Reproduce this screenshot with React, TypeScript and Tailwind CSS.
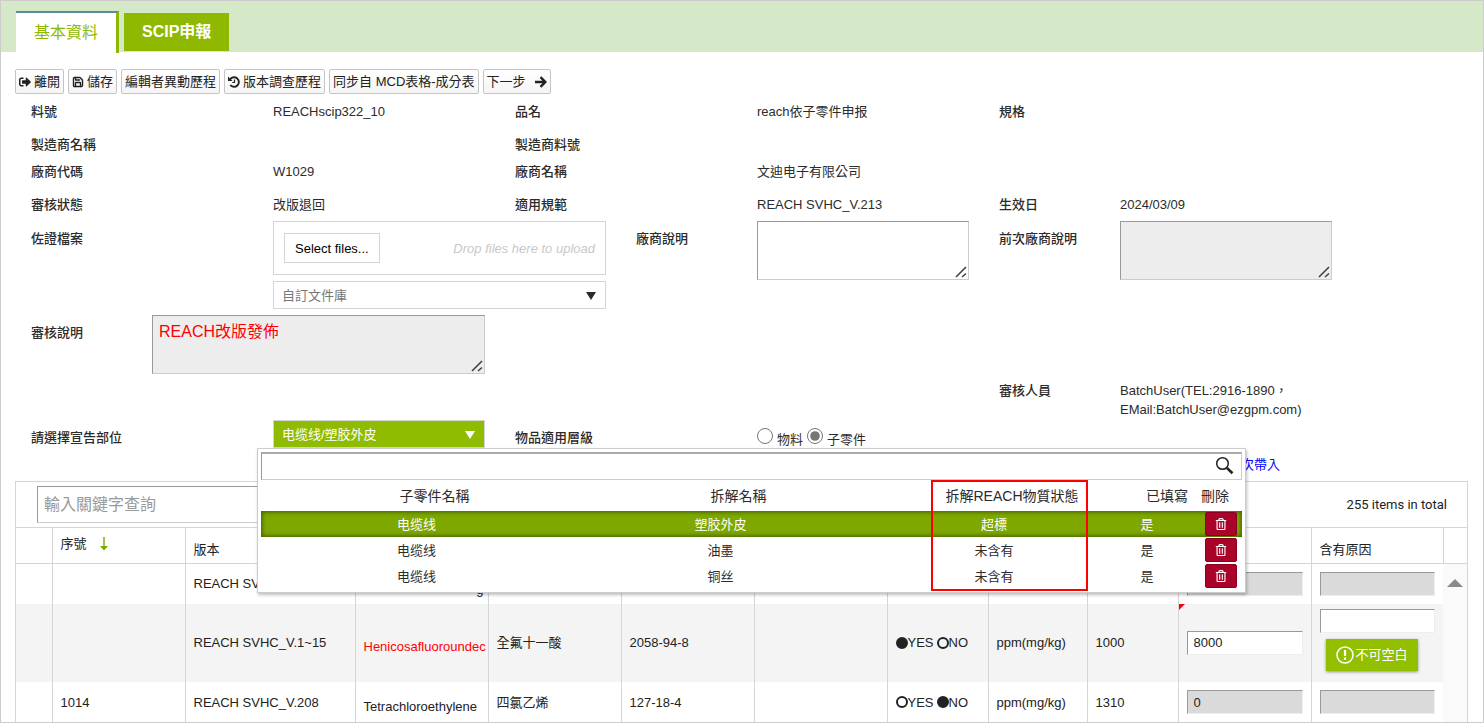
import React from "react"
import { FaSignOutAlt, FaRegTrashAlt } from "react-icons/fa"
import { Save } from "lucide-react"
import clsx from "clsx"

const font = "font-['Liberation_Sans','Noto_Sans_CJK_TC',sans-serif]"

const Label = ({ htmlFor, className, children }: {
    htmlFor?: string,
    className?: string,
    children: React.ReactNode
}) => {
    const style = clsx("px-[15px] font-medium whitespace-nowrap", className)
    if (!htmlFor) return <div className={style}>{children}</div>
    return <label htmlFor={htmlFor} className={style}>{children}</label>
}

const Value = ({ className, children }: { className?: string, children?: React.ReactNode }) => (
    <div className={clsx("px-[15px]", className)}>{children}</div>
)

const ToolButton = ({ children }: { children: React.ReactNode }) => (
    <button className="flex h-[25px] items-center gap-[3px] rounded-xs border border-[#c5c5c5] bg-linear-to-b from-white to-[#f5f5f5] px-[3px] whitespace-nowrap">
        {children}
    </button>
)

const HistoryIcon = () => (
    <svg className="h-3 w-3" viewBox="0 0 12 12" fill="none" stroke="currentColor">
        <path d="M2.200 3.200A4.800 4.800 0 1 1 2.300 9" strokeWidth="1.900" />
        <path d="M0 .6v4.400h4.600z" fill="currentColor" stroke="none" />
        <path d="M6.500 3.500v3H4.300" strokeWidth="1.200" />
    </svg>
)

const ArrowIcon = () => (
    <svg className="ml-1.5 h-3 w-3" viewBox="0 0 12 12" fill="none" stroke="currentColor" strokeWidth="2.400">
        <path d="M0 6h10M5.500 1.200 10.300 6l-4.800 4.800" />
    </svg>
)

const TextArea = ({ id, className, value, readOnly }: {
    id: string,
    className?: string,
    value?: string,
    readOnly?: boolean
}) => (
    <div className="relative h-[59px]">
        <textarea
            id={id}
            defaultValue={value}
            readOnly={readOnly}
            className={clsx("block h-full w-full resize-none border border-t-[#999] border-r-[#ccc] border-b-[#ccc] border-l-[#999] px-1.5 py-1 outline-none",
                readOnly ? "bg-[#ededed]" : "bg-white",
                className
            )}
        />
        <svg className="absolute right-0.5 bottom-0.5 h-3 w-3" viewBox="0 0 12 12" stroke="#444" strokeWidth="1.600">
            <path d="M1 11 11 1M7 11l4-3.500" fill="none" />
        </svg>
    </div>
)

const Caret = ({ className }: { className?: string }) => (
    <svg viewBox="0 0 10 8" className={clsx("pointer-events-none absolute", className)} fill="currentColor">
        <path d="M0 0h10L5 8z" />
    </svg>
)

const CellInput = ({ label, value, disabled }: { label: string, value?: string, disabled?: boolean }) => (
    <input
        aria-label={label}
        defaultValue={value}
        disabled={disabled}
        className={clsx("block h-6 w-full border border-t-[#999] border-r-[#eee] border-b-[#eee] border-l-[#999] px-1.5 outline-none",
            disabled ? "bg-[#dadada]" : "bg-white"
        )}
    />
)

const YesNo = ({ yes }: { yes: boolean }) => {
    const dot = (on: boolean) => (
        <span className={clsx("inline-block h-3 w-3 rounded-full border-2 border-[#222]", on && "bg-[#222]")} />
    )
    return <div className="flex items-center gap-[3px] whitespace-nowrap">
        <span className="flex items-center">{dot(yes)}YES</span>
        <span className="flex items-center">{dot(!yes)}NO</span>
    </div>
}

const parts = [
    { name: "电缆线", piece: "塑胶外皮", status: "超標", filled: "是" },
    { name: "电缆线", piece: "油墨", status: "未含有", filled: "是" },
    { name: "电缆线", piece: "铜丝", status: "未含有", filled: "是" },
]

const PartPopup = () => (
    <div className="absolute top-[28px] -left-4 z-20 w-[989px] border border-[#ccc] bg-white px-[3px] pt-[3px] pb-[3px] shadow-[1px_2px_3px_rgba(0,0,0,0.25)]">
        <div className="relative">
            <input
                aria-label="子零件名稱"
                className="block h-7 w-full border border-t-2 border-t-[#aaa] border-r-[#ccc] border-b-[#ccc] border-l-[#999] bg-white pr-10 pl-2 outline-none"
            />
            <svg className="absolute top-1 right-2 h-5 w-5" viewBox="0 0 20 20" fill="none" stroke="#222">
                <circle cx="8.500" cy="7.500" r="5.800" strokeWidth="1.500" />
                <path d="m12.500 11.500 1.500 1.500" strokeWidth="1.600" />
                <path d="m13.200 12.200 5.300 5" strokeWidth="2.600" />
            </svg>
        </div>
        <table className="w-full table-fixed border-collapse text-center">
            <colgroup>
                <col className="w-[311px]" />
                <col className="w-[297px]" />
                <col className="w-[250px]" />
                <col className="w-[56px]" />
                <col />
            </colgroup>
            <thead className="text-sm whitespace-nowrap">
                <tr className="h-[31px]">
                    <th className="pl-9 font-normal">子零件名稱</th>
                    <th className="pl-9 font-normal">拆解名稱</th>
                    <th className="pl-9 font-normal">拆解REACH物質狀態</th>
                    <th className="pl-[27px] text-left font-normal">已填寫</th>
                    <th className="pl-[26px] text-left font-normal">刪除</th>
                </tr>
            </thead>
            <tbody className="font-['Liberation_Sans','Noto_Sans_CJK_SC',sans-serif]">
                {parts.map((part, index) => (
                    <tr
                        key={index}
                        className={clsx("h-[26px]",
                            index === 0 && "bg-[#7ea700] text-white shadow-[inset_0_0_4px_1px_#3f5a00]"
                        )}
                    >
                        <td>{part.name}</td>
                        <td>{part.piece}</td>
                        <td>{part.status}</td>
                        <td>{part.filled}</td>
                        <td className="py-px pr-[5px]">
                            <button
                                aria-label="刪除"
                                className="ml-auto flex h-6 w-8 items-center justify-center rounded-xs border border-[#8d0022] bg-[#a90329] text-white"
                            >
                                <FaRegTrashAlt className="h-3 w-3" />
                            </button>
                        </td>
                    </tr>
                ))}
            </tbody>
        </table>
        {/* highlight around the status column */}
        <div className="pointer-events-none absolute top-[31px] left-[673px] h-[111px] w-[157px] border-2 border-[#f00]" />
    </div>
)

const Toolbar = () => (
    <div className="flex gap-1 px-3.5 pt-[17px]">
        <ToolButton><FaSignOutAlt className="h-3 w-3" />離開</ToolButton>
        <ToolButton><Save className="h-3 w-3" strokeWidth={2.8} />儲存</ToolButton>
        <ToolButton>編輯者異動歷程</ToolButton>
        <ToolButton><HistoryIcon />版本調查歷程</ToolButton>
        <ToolButton>同步自 MCD表格-成分表</ToolButton>
        <ToolButton>下一步<ArrowIcon /></ToolButton>
    </div>
)

const Details = () => (
    <div className="px-[15px] pt-2 text-[#2b2b2b]">
        <div className="grid h-[33px] grid-cols-12">
            <Label className="col-span-2">料號</Label>
            <Value className="col-span-2">REACHscip322_10</Value>
            <Label className="col-span-2">品名</Label>
            <Value className="col-span-2">reach依子零件申报</Value>
            <Label>規格</Label>
        </div>
        <div className="grid h-[27px] grid-cols-12">
            <Label className="col-span-4">製造商名稱</Label>
            <Label className="col-span-2">製造商料號</Label>
        </div>
        <div className="grid h-[33px] grid-cols-12">
            <Label className="col-span-2">廠商代碼</Label>
            <Value className="col-span-2">W1029</Value>
            <Label className="col-span-2">廠商名稱</Label>
            <Value className="col-span-2">文迪电子有限公司</Value>
        </div>
        <div className="grid h-[26px] grid-cols-12">
            <Label className="col-span-2">審核狀態</Label>
            <Value className="col-span-2">改版退回</Value>
            <Label className="col-span-2">適用規範</Label>
            <Value className="col-span-2">REACH SVHC_V.213</Value>
            <Label>生效日</Label>
            <Value className="col-span-2">2024/03/09</Value>
        </div>
        <div className="grid grid-cols-12">
            <Label htmlFor="library" className="col-span-2 pt-2">佐證檔案</Label>
            <div className="col-span-3 flex flex-col gap-1.5 px-[15px]">
                <div className="flex h-[54px] items-center justify-between border border-[#d5d5d5] px-2.5">
                    <button className="h-[30px] border border-[#d5d5d5] px-2.5 text-black">Select files...</button>
                    <em className="text-[#c8c8c8]">Drop files here to upload</em>
                </div>
                <div className="relative h-7">
                    <select id="library" className="h-full w-full appearance-none border border-[#d5d5d5] bg-white px-2 text-[#777] outline-none">
                        <option>自訂文件庫</option>
                    </select>
                    <Caret className="top-[11px] right-2.5 h-2 w-2.5" />
                </div>
            </div>
            <Label htmlFor="vendor-note" className="pt-2">廠商說明</Label>
            <div className="col-span-2 px-[15px]"><TextArea id="vendor-note" /></div>
            <Label htmlFor="last-note" className="pt-2">前次廠商說明</Label>
            <div className="col-span-2 px-[15px]"><TextArea id="last-note" readOnly /></div>
        </div>
        <div className="grid grid-cols-12 pt-1.5">
            <Label htmlFor="review-note" className="pt-2">審核說明</Label>
            <div className="col-span-3 px-[15px]">
                <TextArea id="review-note" readOnly value="REACH改版發佈" className="text-base text-[#f00]" />
            </div>
        </div>
        <div className="grid grid-cols-12 pt-[7px] pb-px">
            <Label className="col-start-9">審核人員</Label>
            <Value className="col-span-3">BatchUser(TEL:2916-1890，<br />EMail:BatchUser@ezgpm.com)</Value>
        </div>
        <div className="grid h-[35px] grid-cols-12">
            <Label htmlFor="part" className="col-span-2 pt-2">請選擇宣告部位</Label>
            <div className="col-span-2 px-[15px]">
                <div className="relative h-7">
                    <select
                        id="part"
                        className="h-full w-full appearance-none border border-[#d5d5d5] bg-[#8fbc00] px-2 font-['Liberation_Sans','Noto_Sans_CJK_SC',sans-serif] text-white outline-none"
                    >
                        <option>电缆线/塑胶外皮</option>
                    </select>
                    <Caret className="top-[11px] right-2.5 h-2 w-2.5 text-white" />
                    <PartPopup />
                </div>
            </div>
            <Label className="col-span-2 pt-2">物品適用層級</Label>
            <div className="col-span-2 flex items-start gap-1 px-[15px] pt-2">
                <input id="level-material" type="radio" name="level" className="h-4 w-4 accent-[#767676]" />
                <label htmlFor="level-material" className="pt-0.5">物料</label>
                <input id="level-part" type="radio" name="level" defaultChecked className="h-4 w-4 accent-[#767676]" />
                <label htmlFor="level-part" className="pt-0.5">子零件</label>
            </div>
        </div>
        <div className="grid h-[26px] grid-cols-12">
            <div className="col-span-2 col-start-11 px-[15px]">
                <a href="#" className="text-[#00f]">次帶入</a>
            </div>
        </div>
    </div>
)

const cell = "border-r border-[#d5d5d5] px-2"

const SubstanceTable = () => (
    <div className="mr-[15px] ml-3.5 border border-[#d5d5d5]">
        <div className="flex h-[45px] items-center justify-between pr-5 pl-[21px]">
            <input
                aria-label="輸入關鍵字查詢"
                placeholder="輸入關鍵字查詢"
                className="h-[37px] w-[300px] border border-t-[#999] border-r-[#ccc] border-b-[#ccc] border-l-[#999] px-1.5 text-base outline-none placeholder:text-[#999]"
            />
            <span className="font-[Roboto,sans-serif]">255 items in total</span>
        </div>
        <table className="w-full table-fixed border-collapse border-t border-[#d5d5d5] text-left">
            <colgroup>
                <col className="w-9" />
                <col className="w-[133px]" />
                <col className="w-[170px]" />
                <col className="w-[133px]" />
                <col className="w-[133px]" />
                <col className="w-[133px]" />
                <col className="w-[133px]" />
                <col className="w-[101px]" />
                <col className="w-[99px]" />
                <col className="w-[91px]" />
                <col className="w-[133px]" />
                <col />
                <col className="w-6" />
            </colgroup>
            <thead>
                <tr className="h-9 border-b border-[#d5d5d5]">
                    <th className={cell} />
                    <th className={clsx(cell, "pb-1 font-normal")}>
                        <div className="flex items-center gap-3">
                            序號
                            <svg className="h-3.5 w-2.5" viewBox="0 0 10 14" fill="#7ea700">
                                <path d="M4.300 0h1.400v9H9l-4 4.500L1 9h3.300z" />
                            </svg>
                        </div>
                    </th>
                    <th className={clsx(cell, "pt-2 font-normal")}>版本</th>
                    <th className={cell} />
                    <th className={cell} />
                    <th className={cell} />
                    <th className={cell} />
                    <th className={cell} />
                    <th className={cell} />
                    <th className={cell} />
                    <th className={cell} />
                    <th className={clsx(cell, "pt-2 font-normal")}>含有原因</th>
                    <th />
                </tr>
            </thead>
            <tbody>
                <tr className="h-10">
                    <td className={cell} />
                    <td className={cell} />
                    <td className={cell}>REACH SVHC</td>
                    <td className={clsx(cell, "pt-3 pr-1 text-right")}>g</td>
                    <td className={cell} />
                    <td className={cell} />
                    <td className={cell} />
                    <td className={cell} />
                    <td className={cell} />
                    <td className={cell} />
                    <td className={cell}><CellInput label="含量" disabled /></td>
                    <td className="px-2"><CellInput label="含有原因" disabled /></td>
                    <td rowSpan={3} className="bg-[#fafafa] px-1 pt-[15px] align-top">
                        <svg className="h-2 w-4" viewBox="0 0 16 8" fill="#8a8a8a"><path d="M8 0l8 8H0z" /></svg>
                    </td>
                </tr>
                <tr className="h-[78px] bg-[#f4f4f4]">
                    <td className={cell} />
                    <td className={cell} />
                    <td className={cell}>REACH SVHC_V.1~15</td>
                    <td className={clsx(cell, "overflow-hidden pt-2 pr-0 text-[#f00]")}>Henicosafluoroundec</td>
                    <td className={cell}>全氟十一酸</td>
                    <td className={cell}>2058-94-8</td>
                    <td className={cell} />
                    <td className={cell}><YesNo yes /></td>
                    <td className={cell}>ppm(mg/kg)</td>
                    <td className={cell}>1000</td>
                    <td className={clsx(cell, "relative")}>
                        <svg className="absolute top-0 left-0 h-1.5 w-1.5" viewBox="0 0 6 6" fill="#f00"><path d="M0 0h6L0 6z" /></svg>
                        <CellInput label="含量" value="8000" />
                    </td>
                    <td className="px-2 pb-1.5">
                        <CellInput label="含有原因" />
                        <div className="mt-1.5 ml-1.5 flex h-8 w-fit items-center gap-0.5 bg-[#92c000] px-2.5 whitespace-nowrap text-white shadow-[0_1px_3px_rgba(0,0,0,0.4)]">
                            <svg className="h-[18px] w-[18px]" viewBox="0 0 18 18" fill="none" stroke="currentColor">
                                <circle cx="9" cy="9" r="8" strokeWidth="1.500" />
                                <path d="M9 4v6M9 11.500v2.300" strokeWidth="2.200" />
                            </svg>
                            不可空白
                        </div>
                    </td>
                </tr>
                <tr className="h-[41px]">
                    <td className={cell} />
                    <td className={cell}>1014</td>
                    <td className={cell}>REACH SVHC_V.208</td>
                    <td className={clsx(cell, "pt-2")}>Tetrachloroethylene</td>
                    <td className={cell}>四氯乙烯</td>
                    <td className={cell}>127-18-4</td>
                    <td className={cell} />
                    <td className={cell}><YesNo yes={false} /></td>
                    <td className={cell}>ppm(mg/kg)</td>
                    <td className={cell}>1310</td>
                    <td className={cell}><CellInput label="含量" value="0" disabled /></td>
                    <td className="px-2"><CellInput label="含有原因" disabled /></td>
                </tr>
            </tbody>
        </table>
    </div>
)

export default function App() {
    return (
        <div className={clsx(font, "h-screen overflow-hidden border border-[#ccc] bg-white text-[13px] leading-[19px] text-[#222]")}>
            <nav className="flex h-[51px] items-start gap-[5px] bg-[#d5e8c8] px-[15px] pt-2.5 text-base">
                <button className="h-[42px] border-t-2 border-r-3 border-t-[#5b8ba0] border-r-[#8fb800] bg-white px-[18px] text-[#8fb800]">基本資料</button>
                <button className="mt-0.5 h-[38px] bg-[#8fb800] px-[18px] font-bold text-white">SCIP申報</button>
            </nav>
            <Toolbar />
            <Details />
            <SubstanceTable />
        </div>
    )
}
